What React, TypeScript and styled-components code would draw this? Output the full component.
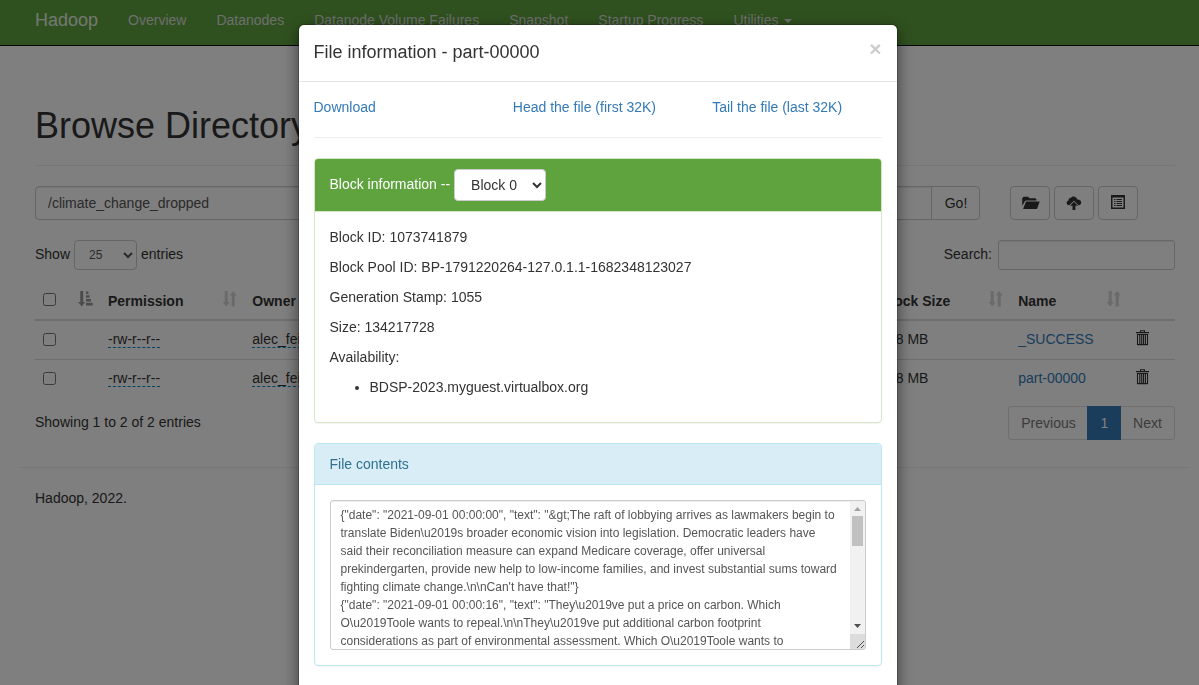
import React from "react";
import styled, { createGlobalStyle } from "styled-components";

const Global = createGlobalStyle`
  *, *::before, *::after { box-sizing: border-box; }
  html, body { margin: 0; background: #fff; overflow: hidden; }
  body {
    font-family: "Liberation Sans", Arial, sans-serif;
    font-size: 14px;
    line-height: 20px;
    color: #333;
  }
  input, select, button { font-family: inherit; }
`;

const Page = styled.div`
  height: 685px;
  overflow: hidden;
`;

const Navbar = styled.nav`
  display: flex;
  height: 46px;
  padding: 0 20px;
  background: #5fa33e;
  border-bottom: 1px solid #080808;
`;

const Brand = styled.a`
  height: 40px;
  padding: 10px 15px;
  font-size: 18px;
  color: #fff;
  opacity: 0.85;
`;

const NavLink = styled.a`
  display: flex;
  align-items: center;
  gap: 6px;
  height: 40px;
  padding: 0 15px;
  color: #dcdcdc;
`;

const Caret = styled.span`
  margin: 1px 0 0 -0.5px;
  border-top: 4px solid;
  border-left: 4px solid transparent;
  border-right: 4px solid transparent;
`;

const Content = styled.main`
  width: 1140px;
  margin-left: 35px;
  padding-top: 60px;
`;

const Title = styled.h1`
  margin: 0;
  height: 60px;
  padding-bottom: 20px;
  font-size: 36px;
  font-weight: 500;
  line-height: 40px;
  border-bottom: 1px solid #eee;
`;

const PathRow = styled.div`
  display: flex;
  margin-top: 20px;
`;

const PathInput = styled.input`
  width: 897px;
  height: 34px;
  padding: 6px 12px;
  font-size: 14px;
  color: #555;
  background: #fff;
  border: 1px solid #ccc;
  border-radius: 4px 0 0 4px;
  box-shadow: inset 0 1px 1px rgba(0, 0, 0, 0.075);
`;

const Button = styled.button`
  display: flex;
  align-items: center;
  justify-content: center;
  width: 40px;
  height: 34px;
  padding: 0;
  font-size: 14px;
  color: #333;
  background: #fff;
  border: 1px solid #ccc;
  border-radius: 4px;
`;

const GoButton = styled(Button)`
  width: 49px;
  margin-left: -1px;
  padding-left: 1px;
  border-radius: 0 4px 4px 0;
`;

const Tools = styled.div`
  display: flex;
  gap: 4px;
  margin-left: 30px;
`;

const Controls = styled.div`
  display: flex;
  justify-content: space-between;
  margin-top: 20px;
  height: 30px;
`;

const Label = styled.label<{ $gap: number }>`
  display: flex;
  align-items: center;
  gap: ${(p) => p.$gap}px;
  height: 30px;

  > span { padding-bottom: 2px; }
`;

const Select = styled.select<{ $w: number; $h: number; $size: number; $pad: number; $color: string }>`
  width: ${(p) => p.$w}px;
  height: ${(p) => p.$h}px;
  padding: 0 ${(p) => p.$pad}px;
  font-size: ${(p) => p.$size}px;
  color: ${(p) => p.$color};
  background: #fff;
  border: 1px solid #ccc;
  border-radius: 4px;
`;

const SearchInput = styled.input`
  width: 177px;
  height: 30px;
  padding: 5px 10px;
  background: #fff;
  border: 1px solid #ccc;
  border-radius: 3px;
  box-shadow: inset 0 1px 1px rgba(0, 0, 0, 0.075);
`;

const Table = styled.div`
  margin-top: 13px;
`;

const Row = styled.div<{ $head?: boolean }>`
  display: grid;
  grid-template-columns: 65px 144.3px 120px 507.9px 138px 117.8px 47px;
  height: ${(p) => (p.$head ? 38 : 39)}px;
  font-weight: ${(p) => (p.$head ? 700 : 400)};
  border-bottom: ${(p) => (p.$head ? "2px" : "1px")} solid #ddd;

  &:last-child { border-color: transparent; }
`;

const Cell = styled.div`
  display: flex;
  align-items: flex-start;
  justify-content: space-between;
  padding: 8px 7px 0 8px;
  white-space: nowrap;
  overflow: hidden;
`;

const Check = styled.input<{ $top: number }>`
  width: 13px;
  height: 13px;
  margin: ${(p) => p.$top}px 0 0;
`;

const SortMark = styled.svg<{ $active?: boolean }>`
  width: 15px;
  height: 16px;
  flex: none;
  opacity: ${(p) => (p.$active ? 0.5 : 0.2)};
`;

const Editable = styled.a`
  height: 19px;
  color: #333;
  border-bottom: 1px dashed #08c;
`;

const Link = styled.a`
  color: #337ab7;
`;

const TableFoot = styled.div`
  display: flex;
  justify-content: space-between;
  margin-top: 7px;
  height: 34px;
`;

const Info = styled.div`
  padding-top: 6px;
`;

const Pager = styled.div`
  display: flex;
`;

const PageItem = styled.a<{ $w: number; $active?: boolean; $end?: "left" | "right" }>`
  width: ${(p) => p.$w}px;
  height: 34px;
  padding-left: ${(p) => (p.$end === "right" ? 0 : 1)}px;
  line-height: 32px;
  text-align: center;
  color: ${(p) => (p.$active ? "#fff" : "#777")};
  background: ${(p) => (p.$active ? "#337ab7" : "#fff")};
  border: 1px solid ${(p) => (p.$active ? "#337ab7" : "#ddd")};
  border-left-width: ${(p) => (p.$end === "right" ? 0 : 1)}px;
  border-right-width: ${(p) => (p.$end === "left" ? 0 : 1)}px;
  border-radius: ${(p) => (p.$end === "left" ? "4px 0 0 4px" : p.$end === "right" ? "0 4px 4px 0" : "0")};
`;

const Footer = styled.footer`
  width: 1170px;
  margin: 27px 0 0 20px;
  padding: 20px 15px;
  border-top: 1px solid #eee;
`;

const Backdrop = styled.div`
  position: fixed;
  inset: 0;
  background: rgba(0, 0, 0, 0.5);
`;

const Modal = styled.section`
  position: fixed;
  top: 24px;
  left: 297.5px;
  width: 600px;
  height: 720px;
  background: #fff;
  background-clip: padding-box;
  border: 1px solid rgba(0, 0, 0, 0.2);
  border-radius: 6px;
  box-shadow: 0 5px 15px rgba(0, 0, 0, 0.5);
`;

const ModalHeader = styled.header`
  display: flex;
  justify-content: space-between;
  height: 57px;
  padding: 13px 15px;
  border-bottom: 1px solid #e5e5e5;
`;

const ModalTitle = styled.h4`
  margin: 0;
  font-size: 18px;
  font-weight: 500;
  line-height: 28px;
`;

const Close = styled.button`
  height: 21px;
  padding: 0;
  font-size: 21px;
  font-weight: 700;
  line-height: 21px;
  color: #000;
  background: none;
  border: 0;
  opacity: 0.2;
  text-shadow: 0 1px 0 #fff;
`;

const ModalBody = styled.div`
  padding: 15px;
`;

const Links = styled.div`
  display: grid;
  grid-template-columns: 199.33px 199.33px 1fr;
  padding-bottom: 20px;
  border-bottom: 1px solid #eee;
`;

const Panel = styled.section<{ $line: string }>`
  margin-top: 20px;
  border: 1px solid ${(p) => p.$line};
  border-radius: 4px;
  box-shadow: 0 1px 1px rgba(0, 0, 0, 0.05);
`;

const PanelHeading = styled.div<{ $bg: string; $fg: string; $line: string }>`
  display: flex;
  gap: 4px;
  padding: 10px 15px;
  color: ${(p) => p.$fg};
  background: ${(p) => p.$bg};
  border-bottom: 1px solid ${(p) => p.$line};
  border-radius: 3px 3px 0 0;

  > span { padding-top: 5px; }
`;

const PanelBody = styled.div`
  padding: 15px;

  p { margin: 0 0 10px; }
  ul { margin: 0 0 10px; padding-left: 40px; }
`;

const FileBox = styled.div`
  display: flex;
  justify-content: space-between;
  height: 150px;
  overflow: hidden;
  font-size: 12px;
  line-height: 18px;
  color: #555;
  border: 1px solid #ccc;
  border-radius: 3px;
  box-shadow: inset 0 1px 1px rgba(0, 0, 0, 0.075);
`;

const FileText = styled.div`
  padding: 5px 0 0 10px;
  white-space: pre;
`;

const ScrollBar = styled.svg`
  flex: none;
  width: 15px;
  height: 147px;
  margin-top: 1px;
`;

const Sort = () => (
  <SortMark viewBox="0 0 15 16" fill="#333">
    <path d="M2.7 0h3v11h2.1L4.2 15.5.5 11h2.2zM9.7 15.5h3V4.5h2.1L11.200 0 7.700 4.500h2z" />
  </SortMark>
);

const SortActive = () => (
  <SortMark $active viewBox="0 0 15 16" fill="#333">
    <path d="M2.200 0h3v11h2.100L3.700 15.500 0 11h2.200zM8 .5h2.400V3H8zM8 4.300h3.500v2.500H8zM8 8h5v2.500H8zM8 11.700h6.700v2.700H8z" />
  </SortMark>
);

const FolderOpen = () => (
  <svg width="20" height="14" viewBox="-2 0 20 14" fill="#333">
    <path d="M.2 10V2.300L1.600.8h4.600l1.200 1.500h6.100l1 1.100v1H4.200c-.7 0-1.200.4-1.500 1zM4 5.400h13.700L15 13H1.100z" />
  </svg>
);

const CloudUpload = () => (
  <svg width="16" height="14" viewBox="0 0 16 14" fill="#333">
    <path d="M3.200 9.200C1.400 9.200.7 8.100.7 6.800c0-1.200.8-2 1.900-2.300C2.400 2.800 3.200 2 4.500 2 5.200.9 6.200.4 7.500.4c1.900 0 3.500 1.400 3.800 3.100 2.200-.2 3.900 1 3.900 2.900 0 1.600-1.100 2.700-2.700 2.800L8 4.800z" />
    <path d="M8 5.800l4 4H9.400v4.100H6.500V9.800H4z" />
  </svg>
);

const ListAlt = () => (
  <svg width="14" height="16" viewBox="0 0 14 16">
    <path fill="#333" fillRule="evenodd" d="M0 0h14v14H0zM1.500 2.500v10h11v-10z" />
    <path stroke="#333" d="M3 4.500h1.500M5.500 4.500H11M3 6.500h1.500M5.500 6.500H11M3 8.500h1.500M5.500 8.500H11M3 10.500h1.500M5.500 10.500H11" />
  </svg>
);

const Trash = () => (
  <svg width="13" height="17" viewBox="0 -1 13 17">
    <path fill="none" stroke="#333" strokeWidth="1.1" d="M4.500 2.200V.8h4v1.400M1.500 4.500v10h10v-10M3.800 5v9M5.700 5v9M7.500 5v9M9.400 5v9" />
    <path fill="#333" d="M0 2h13v1.200H0zM1 4h11v1H1zM1.500 14h10v1.200h-10z" />
  </svg>
);

const files = ["_SUCCESS", "part-00000"];

const contents = [
  '{"date": "2021-09-01 00:00:00", "text": "&gt;The raft of lobbying arrives as lawmakers begin to',
  "translate Biden\\u2019s broader economic vision into legislation. Democratic leaders have",
  "said their reconciliation measure can expand Medicare coverage, offer universal",
  "prekindergarten, provide new help to low-income families, and invest substantial sums toward",
  "fighting climate change.\\n\\nCan't have that!\"}",
  '{"date": "2021-09-01 00:00:16", "text": "They\\u2019ve put a price on carbon. Which',
  "O\\u2019Toole wants to repeal.\\n\\nThey\\u2019ve put additional carbon footprint",
  "considerations as part of environmental assessment. Which O\\u2019Toole wants to",
].join("\n");

export default function App() {
  return (
    <>
      <Global />
      <Page>
        <Navbar>
          <Brand>Hadoop</Brand>
          <NavLink>Overview</NavLink>
          <NavLink>Datanodes</NavLink>
          <NavLink>Datanode Volume Failures</NavLink>
          <NavLink>Snapshot</NavLink>
          <NavLink>Startup Progress</NavLink>
          <NavLink>Utilities<Caret /></NavLink>
        </Navbar>
        <Content>
          <Title>Browse Directory</Title>
          <PathRow>
            <PathInput defaultValue="/climate_change_dropped" />
            <GoButton>Go!</GoButton>
            <Tools>
              <Button><FolderOpen /></Button>
              <Button><CloudUpload /></Button>
              <Button><ListAlt /></Button>
            </Tools>
          </PathRow>
          <Controls>
            <Label $gap={4}>
              <span>Show</span>
              <Select $w={63} $h={30} $size={12} $pad={10} $color="#555"><option>25</option></Select>
              <span>entries</span>
            </Label>
            <Label $gap={6}>
              <span>Search:</span>
              <SearchInput />
            </Label>
          </Controls>
          <Table>
            <Row $head>
              <Cell><Check type="checkbox" $top={2} /><SortActive /></Cell>
              <Cell>Permission<Sort /></Cell>
              <Cell>Owner</Cell>
              <Cell />
              <Cell>Block Size<Sort /></Cell>
              <Cell>Name<Sort /></Cell>
              <Cell />
            </Row>
            {files.map((name) => (
              <Row key={name}>
                <Cell><Check type="checkbox" $top={4} /></Cell>
                <Cell><Editable>-rw-r--r--</Editable></Cell>
                <Cell><Editable>alec_fei</Editable></Cell>
                <Cell />
                <Cell>128 MB</Cell>
                <Cell><Link>{name}</Link></Cell>
                <Cell><Trash /></Cell>
              </Row>
            ))}
          </Table>
          <TableFoot>
            <Info>Showing 1 to 2 of 2 entries</Info>
            <Pager>
              <PageItem $w={79} $end="left">Previous</PageItem>
              <PageItem $w={34} $active>1</PageItem>
              <PageItem $w={54} $end="right">Next</PageItem>
            </Pager>
          </TableFoot>
        </Content>
        <Footer>Hadoop, 2022.</Footer>
      </Page>
      <Backdrop />
      <Modal>
        <ModalHeader>
          <ModalTitle>File information - part-00000</ModalTitle>
          <Close>×</Close>
        </ModalHeader>
        <ModalBody>
          <Links>
            <Link>Download</Link>
            <Link>Head the file (first 32K)</Link>
            <Link>Tail the file (last 32K)</Link>
          </Links>
          <Panel $line="#d6e9c6">
            <PanelHeading $bg="#5fa33e" $fg="#fff" $line="#d6e9c6">
              <span>Block information --</span>
              <Select $w={92} $h={32} $size={14} $pad={12} $color="#333"><option>Block 0</option></Select>
            </PanelHeading>
            <PanelBody>
              <p>Block ID: 1073741879</p>
              <p>Block Pool ID: BP-1791220264-127.0.1.1-1682348123027</p>
              <p>Generation Stamp: 1055</p>
              <p>Size: 134217728</p>
              <p>Availability:</p>
              <ul><li>BDSP-2023.myguest.virtualbox.org</li></ul>
            </PanelBody>
          </Panel>
          <Panel $line="#bce8f1">
            <PanelHeading $bg="#d9edf7" $fg="#31708f" $line="#bce8f1">File contents</PanelHeading>
            <PanelBody>
              <FileBox>
                <FileText>{contents}</FileText>
                <ScrollBar viewBox="0 1 15 147">
                  <path fill="#f1f1f1" d="M0 0h15v133H0z" />
                  <path fill="#dcdcdc" d="M0 133h15v15H0z" />
                  <path fill="#c1c1c1" d="M2 15h11v30H2z" />
                  <path fill="#a3a3a3" d="M4 10l3.500-4L11 10z" />
                  <path fill="#505050" d="M4 123l3.500 4 3.500-4z" />
                  <path stroke="#505050" d="M7 147l7-7M11 147l3-3" />
                </ScrollBar>
              </FileBox>
            </PanelBody>
          </Panel>
        </ModalBody>
      </Modal>
    </>
  );
}
